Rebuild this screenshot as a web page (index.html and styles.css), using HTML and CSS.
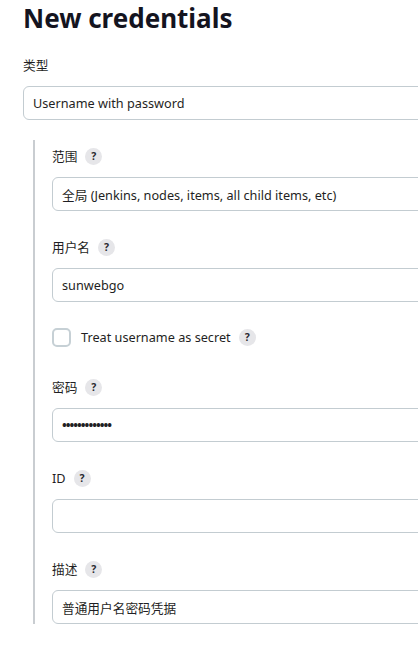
FILE: index.html
```html
<!DOCTYPE html>
<html lang="zh">
<head>
<meta charset="utf-8">
<title>New credentials</title>
<link rel="stylesheet" href="styles.css">
</head>
<body>
<div class="page">
  <h1 class="title">New credentials</h1>
  <div class="field top-field">
    <div class="label-row"><span class="label">类型</span></div>
    <input class="text-input" type="text" value="Username with password" readonly>
  </div>
  <div class="nested">
    <div class="field">
      <div class="label-row"><span class="label">范围</span><span class="help">?</span></div>
      <input class="text-input" type="text" value="全局 (Jenkins, nodes, items, all child items, etc)" readonly>
    </div>
    <div class="field">
      <div class="label-row"><span class="label">用户名</span><span class="help">?</span></div>
      <input class="text-input" type="text" value="sunwebgo">
    </div>
    <div class="check-row">
      <span class="checkbox"></span>
      <span class="check-label">Treat username as secret</span>
      <span class="help">?</span>
    </div>
    <div class="field">
      <div class="label-row"><span class="label">密码</span><span class="help">?</span></div>
      <input class="text-input password" type="password" value="1234567890123">
    </div>
    <div class="field">
      <div class="label-row"><span class="label">ID</span><span class="help">?</span></div>
      <input class="text-input" type="text" value="">
    </div>
    <div class="field last">
      <div class="label-row"><span class="label">描述</span><span class="help">?</span></div>
      <input class="text-input" type="text" value="普通用户名密码凭据">
    </div>
  </div>
</div>
</body>
</html>
```

FILE: styles.css
```css
html, body {
  margin: 0;
  padding: 0;
  background: #ffffff;
  overflow: hidden;
}
body {
  font-family: "Noto Sans", "Noto Sans CJK SC", sans-serif;
  font-size: 12.7px;
  color: #1f1f24;
}
.page {
  padding-left: 23px;
}
.title {
  margin: 0;
  font-size: 26px;
  line-height: 36px;
  font-weight: 700;
  color: #14141f;
}
.field {
  display: flex;
  flex-direction: column;
  gap: 11px;
  margin-bottom: 26px;
}
.field.last {
  margin-bottom: 0;
}
.top-field {
  margin-top: 19px;
  margin-bottom: 20px;
}
.label-row {
  display: flex;
  align-items: center;
  height: 20px;
}
.label {
  line-height: 20px;
}
.help {
  display: inline-flex;
  align-items: center;
  justify-content: center;
  width: 17px;
  height: 17px;
  margin-left: 8px;
  border-radius: 50%;
  background: #e6e6e9;
  color: #2a2a30;
  font-size: 10.5px;
  font-weight: 700;
  line-height: 1;
}
.text-input {
  box-sizing: border-box;
  width: 500px;
  height: 34px;
  margin: 0;
  padding: 0 9px;
  border: 1px solid #c3ccd1;
  border-radius: 6px;
  background: #ffffff;
  font-family: inherit;
  font-size: 12.7px;
  color: #1f1f24;
  outline: none;
}
.password {
  letter-spacing: -1px;
  font-weight: 700;
}
.nested {
  margin-left: 10px;
  padding: 6px 0 0 17px;
  border-left: 2px solid #c9cdd1;
}
.check-row {
  display: flex;
  align-items: center;
  height: 20px;
  margin-top: -1px;
  margin-bottom: 30px;
}
.checkbox {
  box-sizing: border-box;
  width: 19px;
  height: 19px;
  border: 2px solid #c6d0d5;
  border-radius: 5px;
  background: #ffffff;
}
.check-label {
  margin-left: 10px;
  line-height: 20px;
}
.check-row .help {
  margin-left: 8px;
}
```
